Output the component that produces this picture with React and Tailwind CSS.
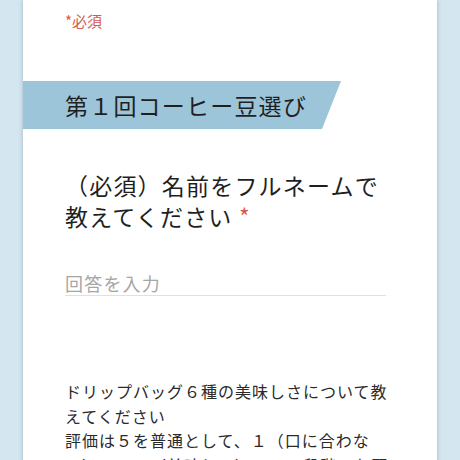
export default function App() {
  return (
    <div
      className="min-h-screen bg-[#d4e6ef] px-[23px]"
      style={{ fontFamily: '"Noto Sans CJK JP", "Noto Sans", sans-serif' }}
    >
      <div className="bg-white shadow-[0_0_4px_rgba(60,90,110,0.35)] pb-10">
        <div className="pl-[42px] pt-[12px] text-[15px] leading-[18px] text-[#d65a4e]">
          *必須
        </div>
        <div className="mt-[51px] flex h-[48px] w-[318px] items-center bg-[#9cc5da] pl-[42px] text-[23px] tracking-[1.2px] text-[#1f1f1f] [clip-path:polygon(0_0,318px_0,299px_100%,0_100%)]">
          第１回コーヒー豆選び
        </div>
        <div className="px-[42px]">
          <div className="mt-[41px] w-[321px] text-[23px] leading-[31px] tracking-[1.2px] text-[#1f1f1f]">
            （必須）名前をフルネームで教えてください <span className="text-[#d65a4e]">*</span>
          </div>
          <div className="mt-[39px] w-[321px] border-b border-[#e0e0e0] text-[18px] leading-[24px] tracking-[1.2px] text-[#a6a6a6]">
            回答を入力
          </div>
          <div className="mt-[83px] w-[330px] text-[16px] leading-[24.5px] tracking-[1px] text-[#2a2a2a]">
            ドリップバッグ６種の美味しさについて教えてください
            <br />
            評価は５を普通として、１（口に合わない）～１０（美味しい）の１０段階でお願いします。
          </div>
        </div>
      </div>
    </div>
  );
}
